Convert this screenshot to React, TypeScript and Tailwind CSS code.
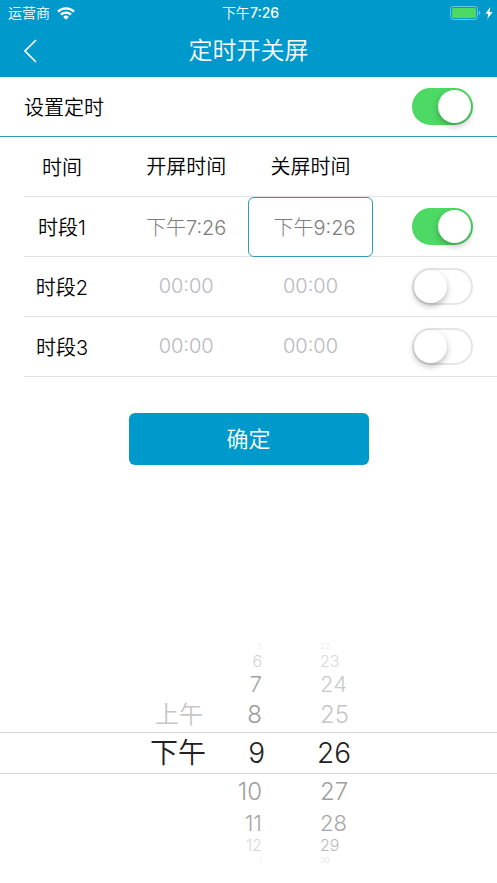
import { useState } from "react";

type Period = { label: string; on: string; off: string; enabled: boolean };

const initialPeriods: Period[] = [
  { label: "时段1", on: "下午7:26", off: "下午9:26", enabled: true },
  { label: "时段2", on: "", off: "", enabled: false },
  { label: "时段3", on: "", off: "", enabled: false },
];

// Height and text size of each wheel row; rows shrink away from the selection.
const rowSizes = [
  "h-3 text-[8px]",
  "h-[18px] text-base",
  "h-[27px] text-[22px]",
  "h-[35px] text-2xl",
  "h-[42px] border-y border-[#d6d6d6] text-[28px]",
  "h-[35px] text-2xl",
  "h-[27px] text-[22px]",
  "h-[18px] text-base",
  "h-3 text-[8px]",
];

const hourShades = [
  "text-[#e8e8e8]",
  "text-[#d2d2d2]",
  "text-[#a2a2a2]",
  "text-[#9a9a9a]",
  "text-[#222222]",
  "text-[#a0a0a0]",
  "text-[#a6a6a6]",
  "text-[#d8d8d8]",
  "text-[#e8e8e8]",
];

const minuteShades = [
  "text-[#e8e8e8]",
  "text-[#d8d8d8]",
  "text-[#cacaca]",
  "text-[#c6c6c6]",
  "text-[#222222]",
  "text-[#a0a0a0]",
  "text-[#a6a6a6]",
  "text-[#b8b8b8]",
  "text-[#e0e0e0]",
];

const halves = ["", "", "", "上午", "下午", "", "", "", ""];
const hours = ["5", "6", "7", "8", "9", "10", "11", "12", "1"];
const minutes = ["22", "23", "24", "25", "26", "27", "28", "29", "30"];

function Switch({
  label,
  checked,
  onChange,
}: {
  label: string;
  checked: boolean;
  onChange: (checked: boolean) => void;
}) {
  return (
    <input
      type="checkbox"
      role="switch"
      aria-label={label}
      checked={checked}
      onChange={(e) => onChange(e.target.checked)}
      className="block h-[37px] w-[61px] shrink-0 appearance-none rounded-full border-2 border-[#e5e5e5] bg-white before:block before:size-[33px] before:rounded-full before:bg-white before:shadow-[0_3px_6px_rgba(0,0,0,0.28)] checked:border-[#4cd964] checked:bg-[#4cd964] checked:before:translate-x-6"
    />
  );
}

function TimeField({
  label,
  value,
  active = false,
}: {
  label: string;
  value: string;
  active?: boolean;
}) {
  return (
    <input
      type="text"
      readOnly
      aria-label={label}
      value={value}
      placeholder="00:00"
      className={`-mb-px block h-[60px] w-full rounded-md border bg-transparent pb-0.5 text-center text-xl font-light text-[#7c7c7c] outline-none placeholder:text-[#b8b8be] ${
        active ? "border-[#2f9bb8] pl-2" : "border-transparent"
      }`}
    />
  );
}

function Wheel({
  label,
  items,
  shades,
  className,
  rowClassName,
}: {
  label: string;
  items: string[];
  shades: string[];
  className: string;
  rowClassName: string;
}) {
  return (
    <ul role="listbox" aria-label={label} className={className}>
      {items.map((item, i) => (
        <li
          key={i}
          role={item ? "option" : "presentation"}
          aria-selected={item ? i === 4 : undefined}
          className={`flex items-center leading-none font-[350] ${rowClassName} ${rowSizes[i]} ${shades[i]} ${
            i === 4 ? "px-[13px]" : "px-4"
          }`}
        >
          {item}
        </li>
      ))}
    </ul>
  );
}

export default function App() {
  const [master, setMaster] = useState(true);
  const [periods, setPeriods] = useState(initialPeriods);

  return (
    <div className="bg-white font-['Inter','Noto_Sans_CJK_SC',sans-serif] text-black">
      <header className="bg-[#0099cc] pb-px text-white">
        <div className="grid h-[26px] grid-cols-3 items-center pr-1 pl-2 text-sm">
          <div className="flex items-center gap-[7px]">
            <span className="font-[350]">运营商</span>
            <svg viewBox="0 0 18 13" className="h-[13px] w-[18px]" fill="none" aria-hidden="true">
              <path d="M1 4.6a11.3 11.3 0 0 1 16 0" stroke="currentColor" strokeWidth="2.3" />
              <path d="M4 7.6a7.1 7.1 0 0 1 10 0" stroke="currentColor" strokeWidth="2.3" />
              <path d="M9 12.7 6.2 9.9a4 4 0 0 1 5.6 0Z" fill="currentColor" />
            </svg>
          </div>
          <span className="text-center font-[350]">
            下午<span className="font-medium">7:26</span>
          </span>
          <div className="flex items-center justify-end gap-1">
            <svg viewBox="0 0 31 14" className="h-[14px] w-[31px]" fill="none" aria-hidden="true">
              <rect x="0.5" y="0.5" width="27" height="13" rx="3" stroke="#6cc8e4" />
              <rect x="2" y="2" width="24" height="10" rx="1.5" fill="#4cd964" />
              <path d="M29 4.8c1.8.6 1.8 3.8 0 4.4Z" fill="#6cc8e4" />
            </svg>
            <svg viewBox="0 0 8 12" className="h-3 w-2" aria-hidden="true">
              <path d="M5.4 0 .4 6.8h2.9L2.4 12l5.2-7H4.5Z" fill="currentColor" />
            </svg>
          </div>
        </div>
        <div className="grid h-[50px] grid-cols-[64px_1fr_64px] items-center">
          <button type="button" aria-label="返回" className="pl-6">
            <svg viewBox="0 0 13 24" className="h-6 w-[13px]" fill="none" aria-hidden="true">
              <path d="M12 1 1 12l11 11" stroke="currentColor" strokeWidth="1.6" />
            </svg>
          </button>
          <h1 className="text-center text-2xl font-[350]">定时开关屏</h1>
        </div>
      </header>

      <main>
        <div className="flex h-[60px] items-center justify-between border-b border-[#2f9bb8] px-6 text-xl">
          <span className="pt-0.5 font-[350]">设置定时</span>
          <Switch label="设置定时" checked={master} onChange={setMaster} />
        </div>

        <div className="pl-6">
          <table className="w-full table-fixed border-separate border-spacing-0 text-xl">
            <thead>
              <tr className="h-[60px] *:border-b *:border-[#e2e2e2] *:p-0 *:font-[350]">
                <th scope="col" className="w-[100px]">
                  <div className="pt-0.5 pr-6">时间</div>
                </th>
                <th scope="col">开屏时间</th>
                <th scope="col">关屏时间</th>
                <td />
              </tr>
            </thead>
            <tbody>
              {periods.map((p, i) => (
                <tr key={p.label} className="h-[60px] *:border-b *:border-[#e2e2e2] *:p-0">
                  <th scope="row" className="font-[350]">
                    <div className="pt-0.5 pr-6">{p.label}</div>
                  </th>
                  <td>
                    <TimeField label={`${p.label} 开屏时间`} value={p.on} />
                  </td>
                  <td>
                    <TimeField label={`${p.label} 关屏时间`} value={p.off} active={i === 0} />
                  </td>
                  <td>
                    <div className="flex justify-end pr-6">
                      <Switch
                        label={p.label}
                        checked={p.enabled}
                        onChange={(enabled) =>
                          setPeriods(periods.map((q, j) => (j === i ? { ...q, enabled } : q)))
                        }
                      />
                    </div>
                  </td>
                </tr>
              ))}
            </tbody>
          </table>
        </div>

        <div className="flex justify-center pt-9">
          <button
            type="button"
            className="h-[52px] w-60 rounded-md bg-[#0099cc] text-[22px] font-[350] text-white"
          >
            确定
          </button>
        </div>

        <div className="mt-[175px] flex pb-4">
          <Wheel
            label="上午或下午"
            items={halves}
            shades={minuteShades}
            className="flex-1"
            rowClassName="justify-end"
          />
          <Wheel
            label="小时"
            items={hours}
            shades={hourShades}
            className="w-[59px]"
            rowClassName="justify-end"
          />
          <Wheel
            label="分钟"
            items={minutes}
            shades={minuteShades}
            className="flex-1"
            rowClassName="justify-start indent-[26px]"
          />
        </div>
      </main>
    </div>
  );
}
